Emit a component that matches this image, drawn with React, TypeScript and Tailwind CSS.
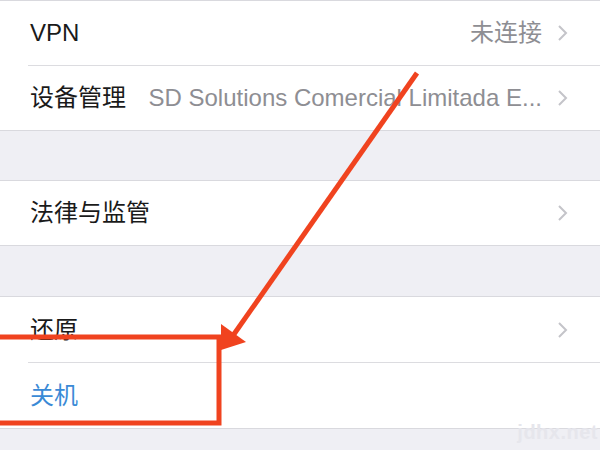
import React from 'react';

const font = { fontFamily: '"Liberation Sans", "Noto Sans CJK SC", sans-serif' };

function Chevron() {
  return (
    <svg width="12" height="18" viewBox="0 0 12 18" className="shrink-0">
      <polyline points="3,2 10,9 3,16" fill="none" stroke="#c4c4c9" strokeWidth="2" />
    </svg>
  );
}

interface RowProps {
  label: string;
  value?: string;
  chevron?: boolean;
  blue?: boolean;
  tall?: boolean;
}

function Row({ label, value, chevron = true, blue, tall }: RowProps) {
  return (
    <div className={`flex items-center bg-white pl-[30px] pr-[32px] ${tall ? 'h-[65px]' : 'h-[64px]'}`}>
      <span className={`shrink-0 text-[24px] ${blue ? 'text-[#3a8ad6]' : 'text-[#1a1a1a]'}`}>{label}</span>
      <div className="ml-[16px] flex min-w-0 flex-1 items-center justify-end gap-[14px]">
        {value && (
          <span className="truncate text-[24px] text-[#8e8e93]">{value}</span>
        )}
        {chevron && <Chevron />}
      </div>
    </div>
  );
}

function Sep() {
  return (
    <div className="bg-white pl-[28px]">
      <div className="h-px bg-[#dcdce0]" />
    </div>
  );
}

export default function App() {
  return (
    <div className="relative h-[450px] w-[600px] overflow-hidden bg-[#efeff4]" style={font}>
      <div className="border-y border-[#d9d9de]">
        <Row label="VPN" value="未连接" />
        <Sep />
        <Row label="设备管理" value="SD Solutions Comercial Limitada E..." />
      </div>

      <div className="mt-[49px] border-y border-[#d9d9de]">
        <Row label="法律与监管" />
      </div>

      <div className="mt-[50px] border-y border-[#d9d9de]">
        <Row label="还原" tall />
        <Sep />
        <Row label="关机" chevron={false} blue tall />
      </div>

      <span className="absolute bottom-[3px] right-[2px] text-[20px] font-bold tracking-wide text-[#e6e6ec]">jdhx.net</span>

      {/* annotation overlay */}
      <svg className="pointer-events-none absolute inset-0" width="600" height="450" viewBox="0 0 600 450">
        <rect x="-10" y="337" width="229" height="86" fill="none" stroke="#f0431f" strokeWidth="5" />
        <line x1="417" y1="73" x2="232" y2="337" stroke="#f0431f" strokeWidth="5" />
        <polygon points="221,350 221,324 246,342" fill="#f0431f" />
      </svg>
    </div>
  );
}
